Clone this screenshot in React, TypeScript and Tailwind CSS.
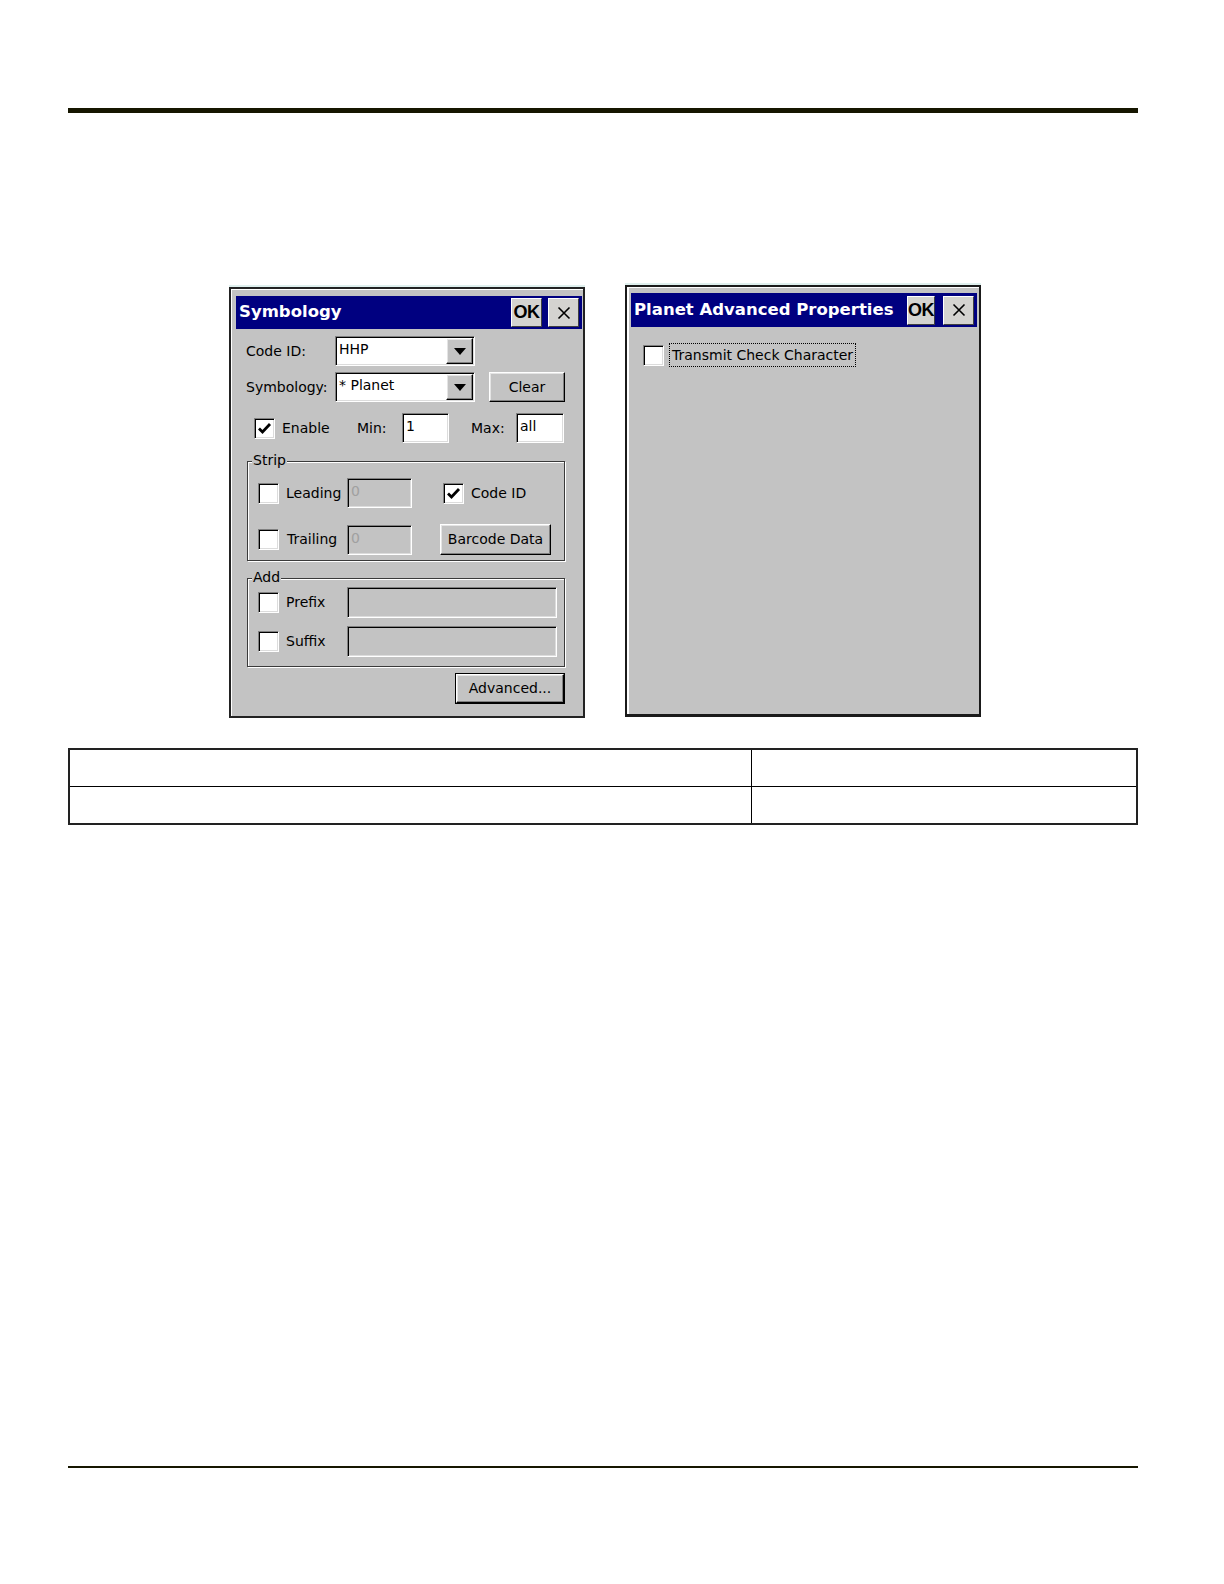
import React from "react";

const F = "font-['DejaVu_Sans',sans-serif]";
const sunken =
  "border border-t-[#808080] border-l-[#808080] border-b-white border-r-white shadow-[inset_1px_1px_0_#000,inset_-1px_-1px_0_#dcdcdc]";
const raised =
  "border border-t-white border-l-white border-b-black border-r-black shadow-[inset_-1px_-1px_0_#808080,inset_1px_1px_0_#e4e4e4] bg-[#c3c3c3]";

function Check({ checked = false }: { checked?: boolean }) {
  return (
    <div className={`w-[21px] h-[21px] bg-white shrink-0 flex items-center justify-center ${sunken}`}>
      {checked && (
        <svg width="15" height="13" viewBox="0 0 15 13">
          <path d="M2 6.5 L5.5 10 L13 2" fill="none" stroke="#000" strokeWidth="2.8" />
        </svg>
      )}
    </div>
  );
}

function Combo({ value }: { value: string }) {
  return (
    <div className={`w-[140px] h-[30px] bg-white flex ${sunken}`}>
      <div className="flex-1 pl-[3px] pt-[2px] text-[14px] text-black leading-[20px]">{value}</div>
      <div className={`w-[27px] h-[26px] mt-[1px] mr-[1px] flex items-center justify-center ${raised}`}>
        <svg width="12" height="7" viewBox="0 0 12 7">
          <path d="M0 0 L12 0 L6 7 Z" fill="#000" />
        </svg>
      </div>
    </div>
  );
}

function Field({ w, value, disabled = false, h = "h-[30px]" }: { w: string; value?: string; disabled?: boolean; h?: string }) {
  return (
    <div
      className={`${w} ${h} ${disabled ? "bg-[#c3c3c3] text-[#a0a0a0]" : "bg-white text-black"} pl-[3px] pt-[3px] text-[14px] leading-[18px] shrink-0 ${sunken}`}
    >
      {value}
    </div>
  );
}

function Btn({ w, h, label, def = false }: { w: string; h: string; label: string; def?: boolean }) {
  if (def) {
    return (
      <div className={`${w} ${h} border border-black flex`}>
        <div className={`flex-1 flex items-center justify-center text-[14px] text-black ${raised}`}>{label}</div>
      </div>
    );
  }
  return <div className={`${w} ${h} flex items-center justify-center text-[14px] text-black shrink-0 ${raised}`}>{label}</div>;
}

function TitleButtons({ okW, gap }: { okW: string; gap: string }) {
  return (
    <div className={`flex items-center ${gap}`}>
      <div
        className={`${okW} h-[29px] flex items-center justify-center bg-[#d4d3d0] border border-t-white border-l-white border-b-[#404040] border-r-[#404040] text-black font-bold text-[18px] font-['Liberation_Sans',sans-serif] tracking-[-0.5px]`}
      >
        OK
      </div>
      <div className="w-[31px] h-[29px] flex items-center justify-center bg-[#d4d3d0] border border-t-white border-l-white border-b-[#404040] border-r-[#404040]">
        <svg width="14" height="14" viewBox="0 0 14 14">
          <path d="M1.5 1.5 L12.5 12.5 M12.5 1.5 L1.5 12.5" stroke="#000" strokeWidth="1.6" />
        </svg>
      </div>
    </div>
  );
}

function Group({ label, h, children }: { label: string; h: string; children: React.ReactNode }) {
  return (
    <div className={`relative ml-[11px] w-[318px] ${h} border border-[#3a3a3a] shadow-[inset_1px_1px_0_#ffffff,1px_1px_0_#ffffff]`}>
      <div className="absolute -top-[11px] left-[4px] px-[1px] bg-[#c3c3c3] text-[14px] leading-[18px] text-black">{label}</div>
      {children}
    </div>
  );
}

function SymbologyDialog() {
  return (
    <div className={`w-[356px] h-[431px] mt-[2px] border-2 border-[#222] shadow-[0_-2px_0_#dff0ee] ${F}`}>
      <div className="w-full h-full bg-[#c3c3c3] border-l border-t border-white pl-[4px] pr-[1px] pt-[6px]">
        <div className="h-[33px] bg-[#000080] flex items-center justify-between pl-[3px] pr-[3px]">
          <span className="text-white font-bold text-[16.5px] leading-none">Symbology</span>
          <TitleButtons okW="w-[31px]" gap="gap-[6px]" />
        </div>

        <div className="mt-[7px] h-[30px] flex items-center">
          <span className="ml-[10px] w-[89px] text-[14px] text-black">Code ID:</span>
          <Combo value="HHP" />
        </div>

        <div className="mt-[6px] h-[30px] flex items-center">
          <span className="ml-[10px] w-[89px] text-[14px] text-black">Symbology:</span>
          <Combo value="* Planet" />
          <div className="ml-[14px]">
            <Btn w="w-[76px]" h="h-[30px]" label="Clear" />
          </div>
        </div>

        <div className="mt-[11px] h-[30px] flex items-center text-[14px] text-black">
          <div className="ml-[18px]">
            <Check checked />
          </div>
          <span className="w-[82px] pl-[7px]">Enable</span>
          <span className="w-[45px]">Min:</span>
          <Field w="w-[47px]" value="1" />
          <span className="ml-[22px] w-[45px]">Max:</span>
          <Field w="w-[48px]" value="all" />
        </div>

        <div className="mt-[18px]">
          <Group label="Strip" h="h-[100px]">
            <div className="pl-[10px]">
              <div className="mt-[16px] h-[30px] flex items-center text-[14px] text-black">
                <Check />
                <span className="w-[68px] pl-[7px]">Leading</span>
                <Field w="w-[65px]" value="0" disabled />
                <div className="ml-[31px]">
                  <Check checked />
                </div>
                <span className="pl-[7px]">Code ID</span>
              </div>
              <div className="mt-[16px] h-[31px] flex items-center text-[14px] text-black">
                <Check />
                <span className="w-[68px] pl-[8px]">Trailing</span>
                <Field w="w-[65px]" value="0" disabled />
                <div className="ml-[28px]">
                  <Btn w="w-[111px]" h="h-[31px]" label="Barcode Data" />
                </div>
              </div>
            </div>
          </Group>
        </div>

        <div className="mt-[17px]">
          <Group label="Add" h="h-[89px]">
            <div className="pl-[10px]">
              <div className="mt-[8px] h-[31px] flex items-center text-[14px] text-black">
                <Check />
                <span className="w-[68px] pl-[7px]">Prefix</span>
                <Field w="w-[210px]" h="h-[31px]" disabled />
              </div>
              <div className="mt-[8px] h-[31px] flex items-center text-[14px] text-black">
                <Check />
                <span className="w-[68px] pl-[7px]">Suffix</span>
                <Field w="w-[210px]" h="h-[31px]" disabled />
              </div>
            </div>
          </Group>
        </div>

        <div className="mt-[6px] ml-[219px]">
          <Btn w="w-[110px]" h="h-[31px]" label="Advanced..." def />
        </div>
      </div>
    </div>
  );
}

function PlanetDialog() {
  return (
    <div className={`w-[356px] h-[432px] border-2 border-[#1a1a1a] border-b-[3px] shadow-[0_-2px_0_#dff0ee] ${F}`}>
      <div className="w-full h-full bg-[#c3c3c3] border-l-2 border-t border-white pl-[2px] pr-[2px] pt-[5px]">
        <div className="h-[34px] bg-[#000080] flex items-center justify-between pl-[3px] pr-[3px]">
          <span className="text-white font-bold text-[16.5px] leading-none">Planet Advanced Properties</span>
          <TitleButtons okW="w-[28px]" gap="gap-[8px]" />
        </div>
        <div className="mt-[16px] ml-[12px] flex items-center">
          <Check />
          <span className="ml-[5px] px-[2px] border border-dotted border-black text-[14px] leading-[22px] text-black">
            Transmit Check Character
          </span>
        </div>
      </div>
    </div>
  );
}

export default function App() {
  return (
    <div className="w-[1224px] h-[1584px] bg-white flex flex-col pt-[108px] pl-[68px]">
      <div className="w-[1070px] h-[5px] bg-[#161600]" />

      <div className="mt-[172px] flex items-start">
        <div className="ml-[161px]">
          <SymbologyDialog />
        </div>
        <div className="ml-[40px]">
          <PlanetDialog />
        </div>
      </div>

      <div className="mt-[30px] w-[1070px] border-2 border-[#222] grid grid-cols-[682px_1fr]">
        <div className="h-[37px] border-r border-b border-black" />
        <div className="h-[37px] border-b border-black" />
        <div className="h-[36px] border-r border-black" />
        <div className="h-[36px]" />
      </div>

      <div className="mt-[641px] w-[1070px] h-[2px] bg-[#161600]" />
    </div>
  );
}
